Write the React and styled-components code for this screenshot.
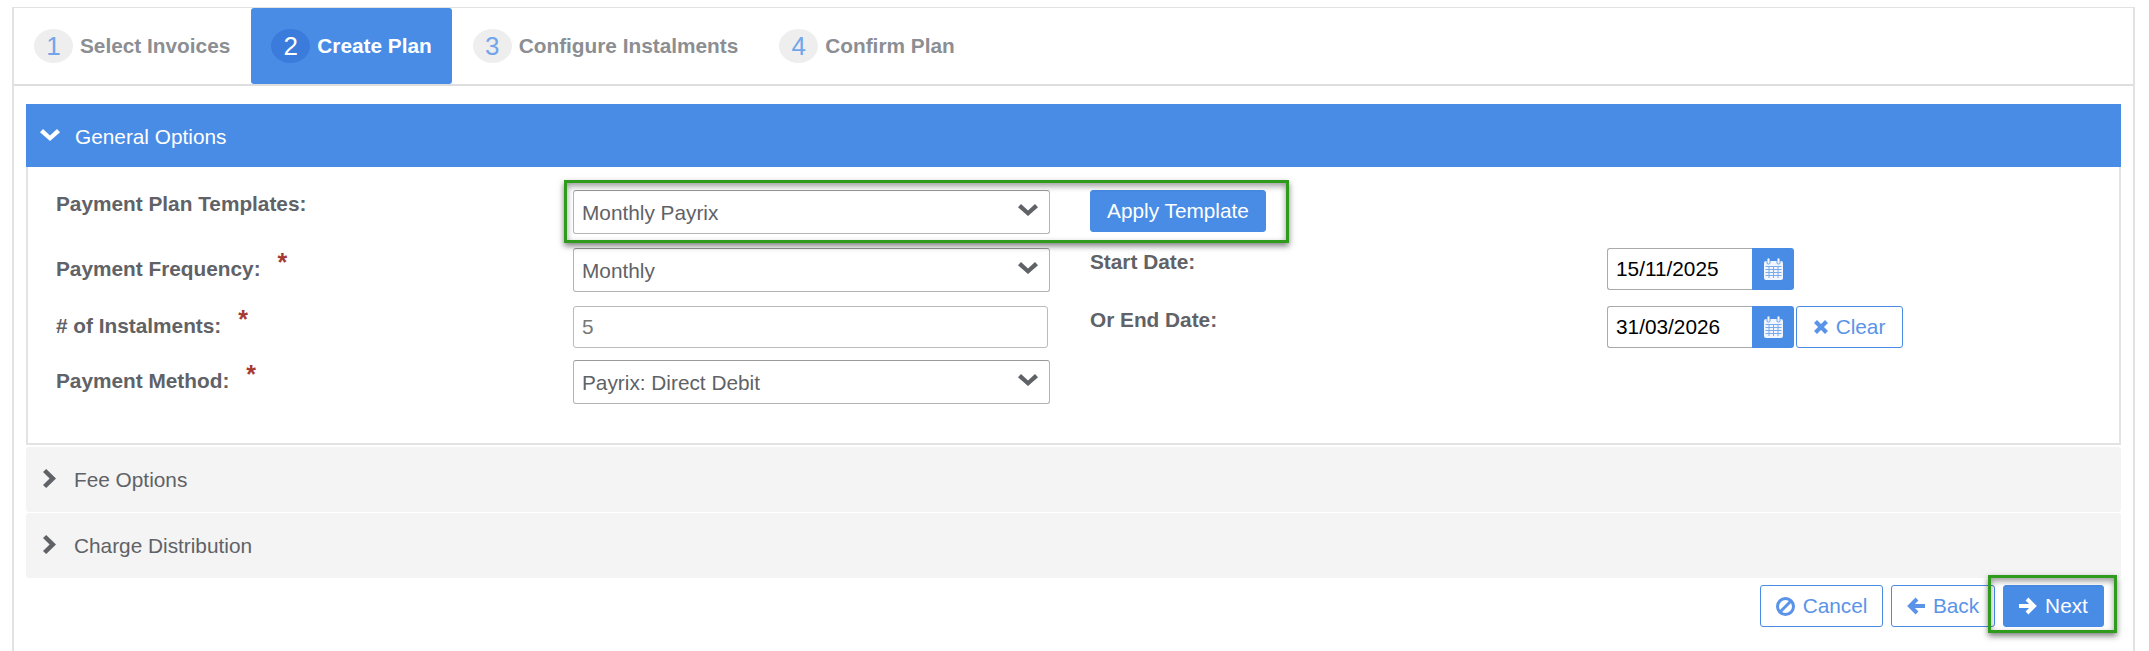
import React from 'react';
import styled, { createGlobalStyle } from 'styled-components';

const blue = '#488ce6';
const labelGrey = '#5f6266';

const GlobalStyle = createGlobalStyle`
  html, body {
    margin: 0;
    background: #fff;
    font-family: "Liberation Sans", Arial, sans-serif;
    font-size: 20.8px;
    color: ${labelGrey};
  }
  * { box-sizing: border-box; }
`;

const Page = styled.div`
  height: 651px;
  overflow: hidden;
  margin: 7px 14px 0 12px;
  border: 1px solid #e2e2e2;
  border-bottom: 0;
  border-left-width: 2px;
  border-right-width: 2px;
`;

const Tabs = styled.nav`
  display: flex;
  height: 78px;
  border-bottom: 2px solid #dedede;
`;

const Tab = styled.div`
  display: flex;
  align-items: center;
  gap: 7px;
  height: 76px;
  padding: 0 20px;
  margin-right: 1px;
  font-weight: bold;
  border-radius: 3px;
  background: ${p => (p.$active ? blue : 'transparent')};
  color: ${p => (p.$active ? '#fff' : '#8b8e92')};
`;

const TabNumber = styled.span`
  display: flex;
  align-items: center;
  justify-content: center;
  width: 39px;
  height: 34px;
  border-radius: 50%;
  font-size: 26px;
  font-weight: normal;
  background: ${p => (p.$active ? '#3a7bdc' : '#eeeeee')};
  color: ${p => (p.$active ? '#fff' : '#72a5ea')};
`;

const Content = styled.div`
  padding: 18px 12px 0 12px;
`;

const PanelHeader = styled.div`
  display: flex;
  align-items: center;
  height: ${p => (p.$open ? '63px' : '65px')};
  padding-left: 14px;
  padding-top: ${p => (p.$open ? '2px' : '0')};
  border-radius: ${p => (p.$open ? '0' : '3px')};
  margin-bottom: ${p => (p.$open ? '0' : '1px')};
  background: ${p => (p.$open ? blue : '#f4f4f4')};
  color: ${p => (p.$open ? '#fff' : labelGrey)};
  svg {
    flex: none;
    margin-top: -3px;
    margin-left: ${p => (p.$open ? '0' : '3px')};
    margin-right: ${p => (p.$open ? '15px' : '18px')};
  }
`;

const PanelBody = styled.div`
  display: grid;
  grid-template-columns: repeat(4, 517px);
  grid-template-rows: 58px 58px 54px 45px;
  align-items: start;
  padding: 23px 0 38px 28px;
  margin-bottom: 2px;
  border: solid #e3e3e3;
  border-width: 0 2px 2px 2px;
`;

const Label = styled.label`
  display: flex;
  font-weight: bold;
  line-height: 20px;
  margin-top: ${p => p.$offset}px;
`;

const Required = styled.span`
  margin-left: 17px;
  margin-top: -7px;
  font-size: 25px;
  color: #a53a32;
`;

const SelectBox = styled.div`
  display: flex;
  align-items: center;
  justify-content: space-between;
  width: 477px;
  height: 44px;
  padding: 2px 11px 0 8px;
  background: #fff;
  border: 1px solid #b4b4b4;
  border-top-color: #999;
  border-radius: 3px;
  svg {
    margin-top: -6px;
  }
`;

const TextInput = styled.input`
  display: block;
  width: ${p => p.$width || '475px'};
  height: 42px;
  padding: 0 8px;
  font: inherit;
  color: ${p => (p.$dark ? '#000' : '#777')};
  border: 1px solid ${p => (p.$dark ? '#aaa' : '#bbb')};
  border-radius: ${p => (p.$dark ? '3px 0 0 3px' : '3px')};
  outline: none;
  ${p => p.$dark && 'border-right: 0;'}
`;

const Button = styled.button`
  display: inline-flex;
  align-items: center;
  justify-content: center;
  gap: 8px;
  width: ${p => p.$width}px;
  height: 42px;
  padding: 0;
  font: inherit;
  border-radius: 3px;
  border: 1px solid ${blue};
  background: ${p => (p.$primary ? blue : '#fff')};
  color: ${p => (p.$primary ? '#fff' : '#5a93e8')};
  svg { flex: none; }
`;

const TemplateCell = styled.div`
  position: relative;
  grid-column: 2 / span 2;
  justify-self: start;
  display: flex;
  gap: 40px;
  align-items: flex-start;
`;

const Callout = styled.div`
  position: absolute;
  top: ${p => p.$top}px;
  left: ${p => p.$left}px;
  right: ${p => p.$right}px;
  bottom: ${p => p.$bottom}px;
  border: 3px solid #2f9b1c;
  box-shadow: 0 3px 6px rgba(0, 0, 0, 0.5), inset 0 3px 6px rgba(0, 0, 0, 0.4);
  pointer-events: none;
`;

const DateCell = styled.div`
  display: flex;
  align-items: stretch;
`;

const CalendarButton = styled.div`
  display: flex;
  align-items: center;
  justify-content: center;
  width: 42px;
  height: 42px;
  background: ${blue};
  border-radius: 0 3px 3px 0;
  margin-right: 2px;
`;

const Footer = styled.div`
  display: flex;
  justify-content: flex-end;
  gap: 8px;
  padding: 6px 17px 0 0;
`;

const NextWrap = styled.div`
  position: relative;
`;

const ChevronDown = () => (
  <svg width="20" height="12" viewBox="0 0 20 12" fill="currentColor">
    <path d="M0 3.2L3 0l7 6.6L17 0l3 3.2L10 12z" />
  </svg>
);

const ChevronRight = () => (
  <svg width="13" height="19" viewBox="0 0 13 19" fill="currentColor">
    <path d="M3.2 0L13 9.5 3.2 19 0 16l6.6-6.5L0 3z" />
  </svg>
);

const ArrowIcon = ({ flip }) => (
  <svg width="18" height="18" viewBox="0 0 18 18" fill="none" stroke="currentColor" strokeWidth="4">
    <path d={flip ? 'M10 2l-7 7 7 7M3 9h15' : 'M8 2l7 7-7 7M15 9H0'} />
  </svg>
);

const BanIcon = () => (
  <svg width="19" height="19" viewBox="0 0 19 19" fill="none" stroke="currentColor" strokeWidth="3">
    <circle cx="9.5" cy="9.5" r="8" />
    <path d="M4 15L15 4" />
  </svg>
);

const CrossIcon = () => (
  <svg width="14" height="14" viewBox="0 0 14 14" fill="none" stroke="currentColor" strokeWidth="4.2">
    <path d="M1.5 1.5l11 11M12.5 1.5l-11 11" />
  </svg>
);

const CalendarIcon = () => (
  <svg width="19" height="22" viewBox="0 0 19 22" fill="#f0f5fe">
    <rect x="0" y="3" width="19" height="19" rx="2" />
    <rect x="3" y="0" width="3" height="6" rx="1.2" stroke={blue} strokeWidth="0.8" />
    <rect x="13" y="0" width="3" height="6" rx="1.2" stroke={blue} strokeWidth="0.8" />
    <path d="M1.5 8.5h16M1.5 11.5h16M1.5 14.5h16M1.5 17.5h16M5 8v12M9.5 8v12M14 8v12" stroke={blue} strokeWidth="1" opacity="0.7" />
  </svg>
);

const steps = ['Select Invoices', 'Create Plan', 'Configure Instalments', 'Confirm Plan'];

const DateField = ({ value, children }) => (
  <DateCell>
    <TextInput $dark $width="145px" defaultValue={value} />
    <CalendarButton>
      <CalendarIcon />
    </CalendarButton>
    {children}
  </DateCell>
);

export default function App() {
  return (
    <>
      <GlobalStyle />
      <Page>
        <Tabs>
          {steps.map((step, i) => (
            <Tab key={step} $active={i === 1}>
              <TabNumber $active={i === 1}>{i + 1}</TabNumber>
              {step}
            </Tab>
          ))}
        </Tabs>
        <Content>
          <PanelHeader $open>
            <ChevronDown />
            General Options
          </PanelHeader>
          <PanelBody>
            <Label $offset={4}>Payment Plan Templates:</Label>
            <TemplateCell>
              <SelectBox>
                Monthly Payrix
                <ChevronDown />
              </SelectBox>
              <Button $primary $width={176}>Apply Template</Button>
              <Callout $top={-10} $left={-9} $right={-23} $bottom={-9} />
            </TemplateCell>
            <div />

            <Label $offset={11}>
              Payment Frequency:<Required>*</Required>
            </Label>
            <SelectBox>
              Monthly
              <ChevronDown />
            </SelectBox>
            <Label $offset={4}>Start Date:</Label>
            <DateField value="15/11/2025" />

            <Label $offset={10}>
              # of Instalments:<Required>*</Required>
            </Label>
            <TextInput defaultValue="5" />
            <Label $offset={4}>Or End Date:</Label>
            <DateField value="31/03/2026">
              <Button $width={107}>
                <CrossIcon />
                Clear
              </Button>
            </DateField>

            <Label $offset={11}>
              Payment Method:<Required>*</Required>
            </Label>
            <SelectBox>
              Payrix: Direct Debit
              <ChevronDown />
            </SelectBox>
          </PanelBody>
          <PanelHeader>
            <ChevronRight />
            Fee Options
          </PanelHeader>
          <PanelHeader>
            <ChevronRight />
            Charge Distribution
          </PanelHeader>
          <Footer>
            <Button $width={123}>
              <BanIcon />
              Cancel
            </Button>
            <Button $width={104}>
              <ArrowIcon flip />
              Back
            </Button>
            <NextWrap>
              <Button $primary $width={101}>
                <ArrowIcon />
                Next
              </Button>
              <Callout $top={-10} $left={-15} $right={-13} $bottom={-6} />
            </NextWrap>
          </Footer>
        </Content>
      </Page>
    </>
  );
}
